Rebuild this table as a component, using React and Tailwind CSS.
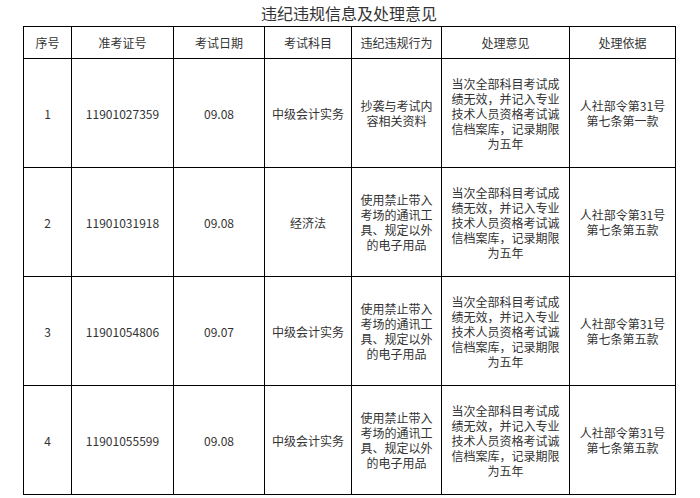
const rows = [
  {
    no: "1",
    id: "11901027359",
    date: "09.08",
    subject: "中级会计实务",
    act: "抄袭与考试内容相关资料",
    basis: "人社部令第31号第七条第一款",
  },
  {
    no: "2",
    id: "11901031918",
    date: "09.08",
    subject: "经济法",
    act: "使用禁止带入考场的通讯工具、规定以外的电子用品",
    basis: "人社部令第31号第七条第五款",
  },
  {
    no: "3",
    id: "11901054806",
    date: "09.07",
    subject: "中级会计实务",
    act: "使用禁止带入考场的通讯工具、规定以外的电子用品",
    basis: "人社部令第31号第七条第五款",
  },
  {
    no: "4",
    id: "11901055599",
    date: "09.08",
    subject: "中级会计实务",
    act: "使用禁止带入考场的通讯工具、规定以外的电子用品",
    basis: "人社部令第31号第七条第五款",
  },
];

const opinion = "当次全部科目考试成绩无效，并记入专业技术人员资格考试诚信档案库，记录期限为五年";

const headers = [
  ["序号", "w-[48px]"],
  ["准考证号", "w-[102px]"],
  ["考试日期", "w-[91px]"],
  ["考试科目", "w-[87px]"],
  ["违纪违规行为", "w-[90px]"],
  ["处理意见", "w-[128px]"],
  ["处理依据", "w-[106px]"],
];

export default function App() {
  return (
    <div
      className="w-[700px] h-[498px] bg-white text-[#333]"
      style={{ fontFamily: '"Noto Sans CJK SC", "Noto Sans", sans-serif' }}
    >
      <div className="ml-[23px] w-[652px]">
        <h1 className="h-[26px] text-center text-[16px] leading-[26px] font-normal">
          违纪违规信息及处理意见
        </h1>
        <table className="w-[652px] table-fixed border-collapse text-[12px] leading-[15px]">
          <thead>
            <tr className="h-[32px]">
              {headers.map(([h, w]) => (
                <th key={h} className={`${w} border border-black font-normal text-center px-[5px]`}>
                  {h}
                </th>
              ))}
            </tr>
          </thead>
          <tbody>
            {rows.map((r) => (
              <tr key={r.no} className="h-[109px]">
                <td className="border border-black text-center">{r.no}</td>
                <td className="border border-black text-center">{r.id}</td>
                <td className="border border-black text-center">{r.date}</td>
                <td className="border border-black text-center px-[5px]">{r.subject}</td>
                <td className="border border-black text-center px-[6px]">{r.act}</td>
                <td className="border border-black text-center px-[8px]">{opinion}</td>
                <td className="border border-black text-center px-[8px]">{r.basis}</td>
              </tr>
            ))}
          </tbody>
        </table>
      </div>
    </div>
  );
}
